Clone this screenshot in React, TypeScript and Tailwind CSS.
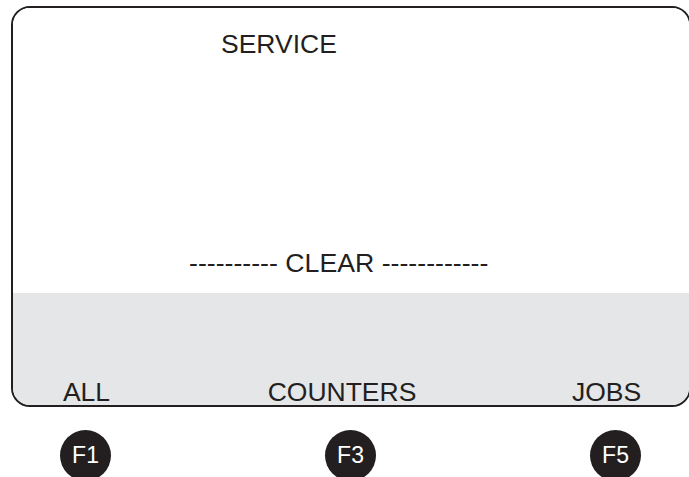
import React from "react";

export default function App() {
  const font = { fontFamily: '"Liberation Sans", Arial, sans-serif' };
  return (
    <div
      className="w-[689px] h-[477px] bg-white overflow-hidden text-[#231f20]"
      style={font}
    >
      <div className="ml-[11px] mt-[6px] w-[680px] h-[401px] border-2 border-[#231f20] rounded-[19px] overflow-hidden flex flex-col">
        <div className="h-[286px] bg-white flex flex-col">
          <div className="mt-[23px] pl-[208px] text-[26.5px] leading-[26px]">SERVICE</div>
          <div className="mt-[193px] pl-[176px] text-[26.7px] leading-[26px] whitespace-pre">
            ---------- CLEAR ------------
          </div>
        </div>
        <div className="flex-1 bg-[#e5e6e8] flex flex-col">
          <div className="mt-[86px] grid grid-cols-[147px_364px_165px] text-[26.5px] leading-[26px] text-center">
            <div>ALL</div>
            <div>COUNTERS</div>
            <div>JOBS</div>
          </div>
        </div>
      </div>
      <div className="mt-[23px] ml-[60px] flex gap-[214px]">
        {["F1", "F3", "F5"].map((k) => (
          <div
            key={k}
            className="w-[51px] h-[51px] rounded-full bg-[#231f20] text-white text-[23px] leading-none flex items-center justify-center"
          >
            {k}
          </div>
        ))}
      </div>
    </div>
  );
}
